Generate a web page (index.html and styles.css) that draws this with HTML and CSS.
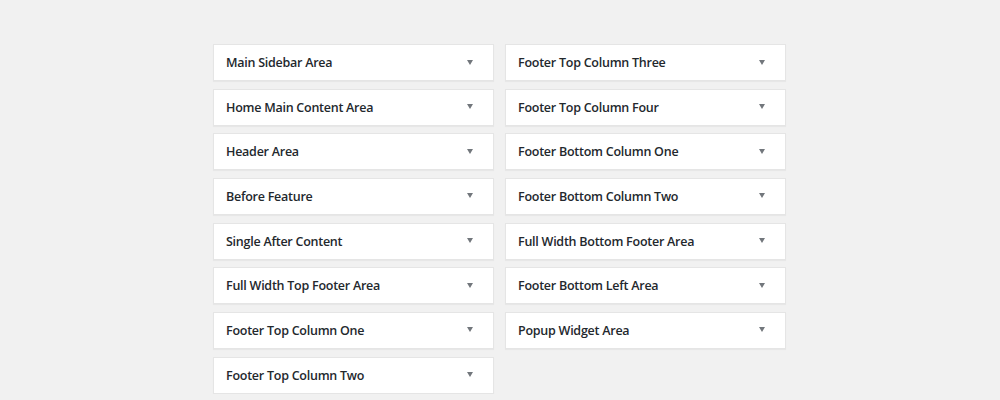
FILE: index.html
```html
<!DOCTYPE html>
<html>
<head>
<meta charset="utf-8">
<link rel="stylesheet" href="styles.css">
</head>
<body>
<div class="areas">
  <div class="col">
    <div class="card"><span class="title">Main Sidebar Area</span><span class="arrow"></span></div>
    <div class="card"><span class="title">Home Main Content Area</span><span class="arrow"></span></div>
    <div class="card"><span class="title">Header Area</span><span class="arrow"></span></div>
    <div class="card"><span class="title">Before Feature</span><span class="arrow"></span></div>
    <div class="card"><span class="title">Single After Content</span><span class="arrow"></span></div>
    <div class="card"><span class="title">Full Width Top Footer Area</span><span class="arrow"></span></div>
    <div class="card"><span class="title">Footer Top Column One</span><span class="arrow"></span></div>
    <div class="card"><span class="title">Footer Top Column Two</span><span class="arrow"></span></div>
  </div>
  <div class="col">
    <div class="card"><span class="title">Footer Top Column Three</span><span class="arrow"></span></div>
    <div class="card"><span class="title">Footer Top Column Four</span><span class="arrow"></span></div>
    <div class="card"><span class="title">Footer Bottom Column One</span><span class="arrow"></span></div>
    <div class="card"><span class="title">Footer Bottom Column Two</span><span class="arrow"></span></div>
    <div class="card"><span class="title">Full Width Bottom Footer Area</span><span class="arrow"></span></div>
    <div class="card"><span class="title">Footer Bottom Left Area</span><span class="arrow"></span></div>
    <div class="card"><span class="title">Popup Widget Area</span><span class="arrow"></span></div>
  </div>
</div>
</body>
</html>
```
FILE: styles.css
```css
html, body {
  margin: 0;
  padding: 0;
  background: #f1f1f1;
}
body {
  font-family: "Open Sans", "Noto Sans", sans-serif;
  color: #23282d;
}
.areas {
  display: flex;
  gap: 11px;
  padding: 44px 0 0 213px;
}
.col {
  display: flex;
  flex-direction: column;
  gap: 7.67px;
  width: 281px;
}
.card {
  box-sizing: border-box;
  height: 37px;
  background: #fff;
  border: 1px solid #e5e5e5;
  box-shadow: 0 1px 1px rgba(0,0,0,0.04);
  display: flex;
  align-items: center;
  justify-content: space-between;
  padding: 0 20px 0 12px;
}
.title {
  font-size: 12.5px;
  font-weight: 600;
  letter-spacing: -0.25px;
}
.arrow {
  width: 0;
  height: 0;
  border-left: 3.5px solid transparent;
  border-right: 3.5px solid transparent;
  border-top: 5px solid #72777c;
  margin-top: -1px;
}
```
